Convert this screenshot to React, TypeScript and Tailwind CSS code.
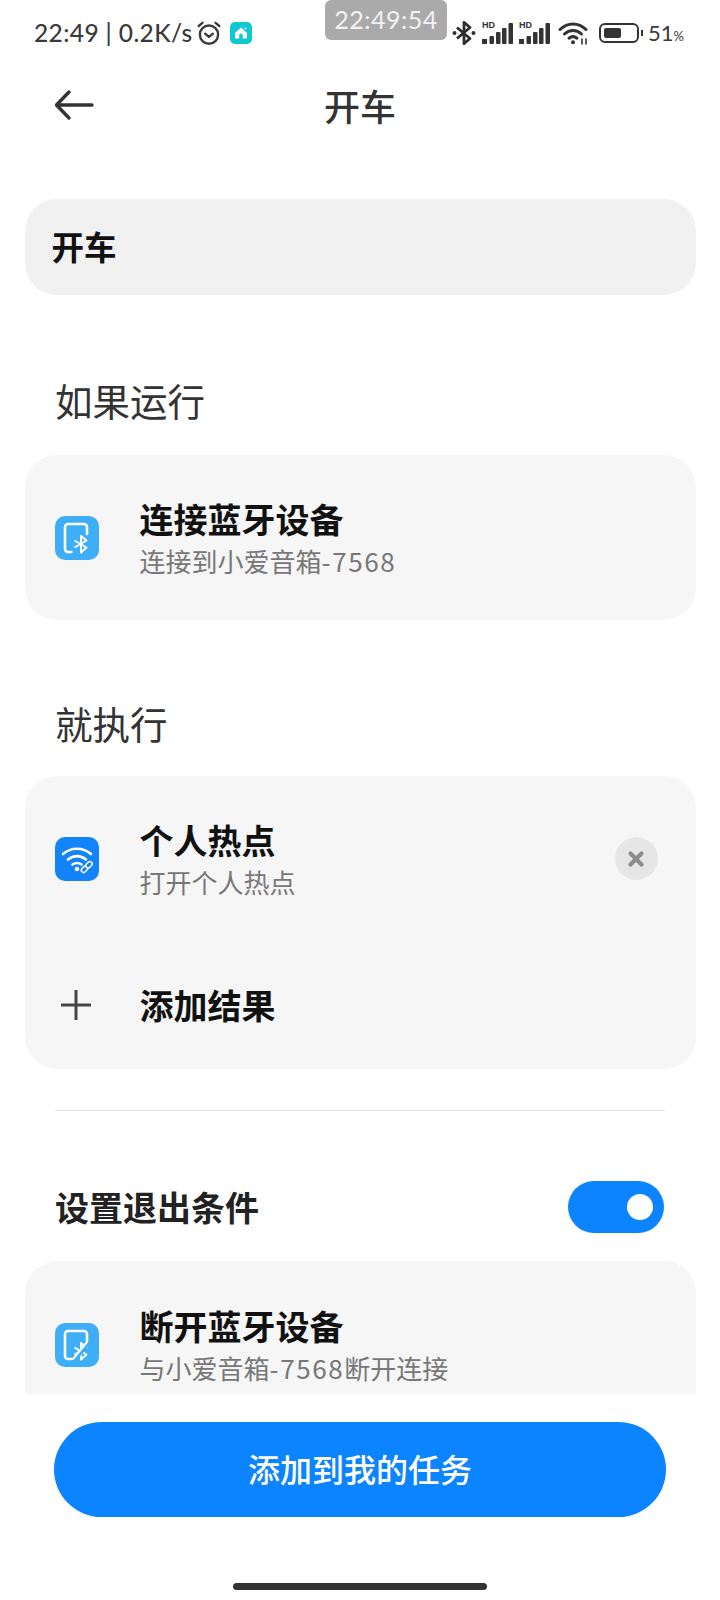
const cjk = "font-['Noto_Sans_CJK_SC','Noto_Sans',sans-serif]"

function AlarmIcon() {
  return (
    <svg width="26" height="26" viewBox="0 0 24 24" fill="none" stroke="#3a3a3a" strokeWidth="2.2" strokeLinecap="round" strokeLinejoin="round">
      <circle cx="12" cy="13.5" r="8.4" />
      <path d="M8.4 12.6l3.6 3 3.6-3" />
      <path d="M2.5 5.5L6 2.6M21.5 5.5L18 2.6" />
    </svg>
  )
}

function HomeBadge() {
  return (
    <div className="flex h-[22px] w-[22px] items-center justify-center rounded-[5px] bg-[#12c8cf]">
      <svg width="14" height="14" viewBox="0 0 14 14" fill="white">
        <path d="M7 1.5L1 7v5.5h4.2V9.4a1.8 1.8 0 013.6 0v3.1H13V7z" />
        <circle cx="11.5" cy="2.5" r="1" />
      </svg>
    </div>
  )
}

function BluetoothGlyph() {
  return (
    <svg width="24" height="26" viewBox="0 0 24 26" fill="none" stroke="#2e2e2e" strokeWidth="2.8" strokeLinejoin="round">
      <path d="M5 7.5l13 11-6 5.2V2.3l6 5.2-13 11" />
      <circle cx="2.5" cy="13" r="2" fill="#2e2e2e" stroke="none" />
      <circle cx="21.5" cy="13" r="2" fill="#2e2e2e" stroke="none" />
    </svg>
  )
}

function SignalIcon() {
  return (
    <div className="relative h-[22px] w-[32px]">
      <span className="absolute left-0 top-[-1px] font-['Liberation_Sans',sans-serif] text-[9px] font-bold leading-[9px] text-[#333]">HD</span>
      <svg className="absolute inset-0" width="32" height="22" viewBox="0 0 32 22" fill="#333">
        <rect x="0" y="17" width="5" height="5" />
        <rect x="7.5" y="14" width="4.5" height="8" rx="1" />
        <rect x="14" y="10" width="4.5" height="12" rx="1" />
        <rect x="20" y="6" width="4.5" height="16" rx="1" />
        <rect x="26.5" y="1" width="4.5" height="21" rx="1" />
      </svg>
    </div>
  )
}

function WifiIcon() {
  return (
    <svg width="31" height="24" viewBox="0 0 31 24" fill="none" stroke="#333" strokeWidth="3" strokeLinecap="round">
      <path d="M2 8.5C9.5 1 20.5 1 28 8.5" />
      <path d="M6.5 13c5-4.6 12-4.6 17 0" />
      <path d="M11 17.2c2.6-2 5.4-2 8 0" />
      <circle cx="15" cy="21.2" r="2" fill="#333" stroke="none" />
      <path d="M24 18v5M28 18v5" strokeWidth="1.6" />
    </svg>
  )
}

function BatteryIcon() {
  return (
    <div className="flex items-center gap-[2px]">
      <div className="h-[20px] w-[40px] rounded-[6px] border-2 border-[#333] p-[3px]">
        <div className="h-full w-[17px] rounded-[2px] bg-[#333]" />
      </div>
      <div className="h-[6px] w-[2px] bg-[#333]" />
    </div>
  )
}

function StatusBar() {
  return (
    <div className="relative flex h-[66px] items-center justify-between pl-[34px] pr-[36px] text-[#3a3a3a]">
      <div className="flex items-center">
        <span className="font-['Lato',sans-serif] text-[24.5px] font-medium leading-none tracking-[0.4px]">22:49 | 0.2K/s</span>
        <span className="ml-[3px]"><AlarmIcon /></span>
        <span className="ml-[8px]"><HomeBadge /></span>
      </div>
      <div className="flex items-center">
        <BluetoothGlyph />
        <span className="ml-[6px]"><SignalIcon /></span>
        <span className="ml-[5px]"><SignalIcon /></span>
        <span className="ml-[7px]"><WifiIcon /></span>
        <span className="ml-[10px]"><BatteryIcon /></span>
        <span className="ml-[5px] font-['Lato',sans-serif] text-[22px] leading-none">51<span className="text-[13px]">%</span></span>
      </div>
      {/* screen recorder clock floats over the status bar */}
      <div className="absolute left-[325px] top-0 flex h-[40px] w-[122px] items-center justify-center rounded-[6px] bg-[#aaaaaa] font-['Lato',sans-serif] text-[25px] tracking-[0.5px] text-[#f2f2f2]">
        22:49:54
      </div>
    </div>
  )
}

function Header() {
  return (
    <div className="relative flex h-[78px] items-center justify-center">
      <svg className="absolute left-[54px] top-[23px]" width="40" height="32" viewBox="0 0 40 32" fill="none" stroke="#333" strokeWidth="3.4" strokeLinecap="round" strokeLinejoin="round">
        <path d="M38 16H3" />
        <path d="M15 3L2.5 16 15 29" />
      </svg>
      <h1 className="text-[36px] font-medium leading-none text-[#333]">开车</h1>
    </div>
  )
}

function BluetoothTile({ off = false }: { off?: boolean }) {
  return (
    <svg className="shrink-0" width="44" height="44" viewBox="0 0 44 44" fill="none">
      <rect width="44" height="44" rx="10" fill="#3eaef6" />
      <path d="M16.5 36H13a3 3 0 01-3-3V11a3 3 0 013-3h16a3 3 0 013 3v7" stroke="white" strokeWidth="2.6" strokeLinecap="round" />
      <path d="M19.5 24.5l12 7-5.5 5V20l5.5 4.5-12 7" stroke="white" strokeWidth="2" strokeLinejoin="round" />
      {off && <path d="M19 37l14-17" stroke="#3eaef6" strokeWidth="5" />}
      {off && <path d="M18 36l14-17" stroke="white" strokeWidth="2" strokeLinecap="round" />}
    </svg>
  )
}

function HotspotTile() {
  return (
    <svg className="shrink-0" width="44" height="44" viewBox="0 0 44 44" fill="none">
      <rect width="44" height="44" rx="10" fill="#1283f8" />
      <g stroke="white" strokeWidth="2.6" strokeLinecap="round">
        <path d="M8 17c8-7 20-7 28 0" />
        <path d="M13 22.5c5.5-4.5 12.5-4.5 18 0" />
        <path d="M17.5 27.5c3-2 6-2 9 0" />
      </g>
      <circle cx="22" cy="32" r="2.3" fill="white" />
      <g stroke="white" strokeWidth="1.5" fill="#1283f8">
        <rect x="26" y="30" width="7" height="4.6" rx="2.3" transform="rotate(-45 29.5 32.3)" />
        <rect x="30.5" y="25.5" width="7" height="4.6" rx="2.3" transform="rotate(-45 34 27.8)" />
      </g>
    </svg>
  )
}

function TaskRow({ icon, title, subtitle, trailing }: { icon: React.ReactNode; title: string; subtitle: React.ReactNode; trailing?: React.ReactNode }) {
  return (
    <div className="flex items-center pl-[30px] pr-[38px]">
      {icon}
      <div className="ml-[41px] flex-1">
        <div className="text-[34px] font-bold leading-[44px] text-[#111]">{title}</div>
        <div className="mt-[3px] text-[26px] leading-[34px] text-[#777]">{subtitle}</div>
      </div>
      {trailing}
    </div>
  )
}

function SpeakerName() {
  return <span className="tracking-[1.6px]">-7568</span>
}

function SectionTitle({ children }: { children: string }) {
  return <div className="px-[55px] text-[37.5px] leading-[48px] text-[#333]">{children}</div>
}

function RemoveButton() {
  return (
    <div className="flex h-[43px] w-[43px] items-center justify-center rounded-full bg-[#e6e6e6]">
      <svg width="18" height="18" viewBox="0 0 18 18" stroke="#8c8c8c" strokeWidth="4.2" strokeLinecap="round">
        <path d="M3.5 3.5l11 11M14.5 3.5l-11 11" />
      </svg>
    </div>
  )
}

export default function App() {
  return (
    <div className={`${cjk} flex h-[1600px] w-[720px] flex-col overflow-hidden bg-white`}>
      <StatusBar />
      <Header />

      <div className="min-h-0 flex-1 overflow-hidden">
        <div className="mx-[24.5px] mt-[55px] flex h-[96px] items-center rounded-[32px] bg-[#f1f1f1] pb-[2px] pl-[27px] text-[32.5px] font-bold text-[#111]">
          开车
        </div>

        <div className="mt-[81px]"><SectionTitle>如果运行</SectionTitle></div>
        <div className="mx-[24.5px] mt-[31px] flex h-[165px] items-center rounded-[32px] bg-[#f6f6f6]">
          <div className="w-full">
            <TaskRow icon={<BluetoothTile />} title="连接蓝牙设备" subtitle={<>连接到小爱音箱<SpeakerName /></>} />
          </div>
        </div>

        <div className="mt-[79px]"><SectionTitle>就执行</SectionTitle></div>
        <div className="mx-[24.5px] mt-[29px] h-[293px] rounded-[32px] bg-[#f6f6f6] pt-[42px]">
          <TaskRow icon={<HotspotTile />} title="个人热点" subtitle="打开个人热点" trailing={<RemoveButton />} />
          <div className="mt-[84px] flex items-center pl-[36px]">
            <svg width="30" height="30" viewBox="0 0 30 30" stroke="#444" strokeWidth="3">
              <path d="M15 0v30M0 15h30" />
            </svg>
            <span className="ml-[49px] text-[34px] font-bold leading-[44px] text-[#111]">添加结果</span>
          </div>
        </div>

        <div className="mx-[55px] mt-[41px] h-px bg-[#e2e2e2]" />

        <div className="mt-[70px] flex items-center justify-between pl-[55px] pr-[56px]">
          <span className="text-[34px] font-bold leading-[44px] text-[#222]">设置退出条件</span>
          <div className="flex h-[52px] w-[96px] items-center justify-end rounded-full bg-[#0d84ff] pr-[11px]">
            <div className="h-[26px] w-[26px] rounded-full bg-white" />
          </div>
        </div>

        <div className="mx-[24.5px] mt-[28px] h-[200px] rounded-t-[32px] bg-[#f6f6f6] pt-[43px]">
          <TaskRow icon={<BluetoothTile off />} title="断开蓝牙设备" subtitle={<>与小爱音箱<SpeakerName />断开连接</>} />
        </div>
      </div>

      <div className="h-[206px] shrink-0 px-[54px] pt-[28px]">
        <div className="flex h-[95px] items-center justify-center rounded-full bg-[#0d84ff] pb-[3px] text-[32px] font-medium text-white">
          添加到我的任务
        </div>
        <div className="mx-auto mt-[66px] h-[7px] w-[254px] rounded-full bg-[#333]" />
      </div>
    </div>
  )
}
